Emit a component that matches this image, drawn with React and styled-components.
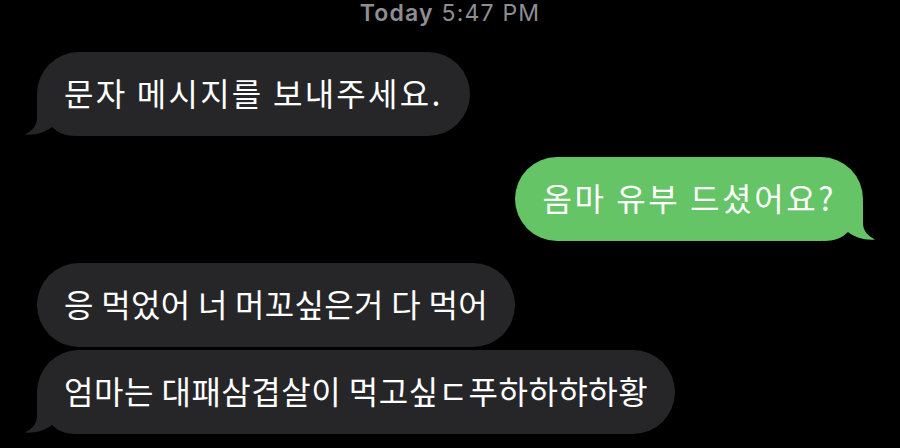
import React from "react";
import styled, { createGlobalStyle } from "styled-components";

const Global = createGlobalStyle`
  html, body { margin: 0; padding: 0; background: #000; }
  body { width: 900px; height: 448px; overflow: hidden; }
`;

const Screen = styled.div`
  width: 900px;
  height: 448px;
  background: #000;
  display: flex;
  flex-direction: column;
  padding: 0 37px;
  box-sizing: border-box;
  font-family: "Noto Sans CJK KR", "Noto Sans", sans-serif;
`;

const Stamp = styled.div`
  font-family: Inter, "Liberation Sans", Arial, sans-serif;
  font-size: 23px;
  line-height: 26px;
  letter-spacing: 1.2px;
  color: #8e8e93;
  text-align: center;
  margin-bottom: 26px;
  b { font-weight: 600; }
`;

const Row = styled.div`
  display: flex;
  justify-content: ${(p) => (p.$me ? "flex-end" : "flex-start")};
  margin-top: ${(p) => p.$gap}px;
`;

const Bubble = styled.div`
  position: relative;
  background: ${(p) => (p.$me ? "#65c466" : "#262628")};
  color: #fff;
  font-size: 32px;
  line-height: 38px;
  padding: 21px 27px 25px;
  border-radius: 42px;
  white-space: nowrap;
`;

const Text = styled.span`
  position: relative;
  z-index: 1;
  letter-spacing: ${(p) => p.$track}px;
`;

const Tail = styled.svg`
  position: absolute;
  bottom: 0;
  width: 52px;
  height: 40px;
  z-index: 0;
  ${(p) =>
    p.$me
      ? "right: -12px; transform: scaleX(-1);"
      : "left: -12px;"}
`;

const TailShape = ({ me, color }) => (
  <Tail $me={me} viewBox="0 0 52 40">
    <path
      d="M12 0 L12 22 C12 30 7 35 0 38.5 C10 39.5 20 36.5 27 31 C33 37 40 40 52 40 L52 0 Z"
      fill={color}
    />
  </Tail>
);

const messages = [
  { text: "문자 메시지를 보내주세요.", me: false, tail: true, gap: 0, track: 2.25 },
  { text: "옴마 유부 드셨어요?", me: true, tail: true, gap: 21, track: 2.6 },
  { text: "응 먹었어 너 머꼬싶은거 다 먹어", me: false, tail: false, gap: 22, track: 0.3 },
  { text: "엄마는 대패삼겹살이 먹고싶ㄷ푸하하햐하황", me: false, tail: true, gap: 3, track: 0.5 },
];

export default function App() {
  return (
    <>
      <Global />
      <Screen>
        <Stamp>
          <b>Today</b> 5:47 PM
        </Stamp>
        {messages.map((m, i) => (
          <Row key={i} $me={m.me} $gap={m.gap}>
            <Bubble $me={m.me}>
              {m.tail && <TailShape me={m.me} color={m.me ? "#65c466" : "#262628"} />}
              <Text $track={m.track}>{m.text}</Text>
            </Bubble>
          </Row>
        ))}
      </Screen>
    </>
  );
}
